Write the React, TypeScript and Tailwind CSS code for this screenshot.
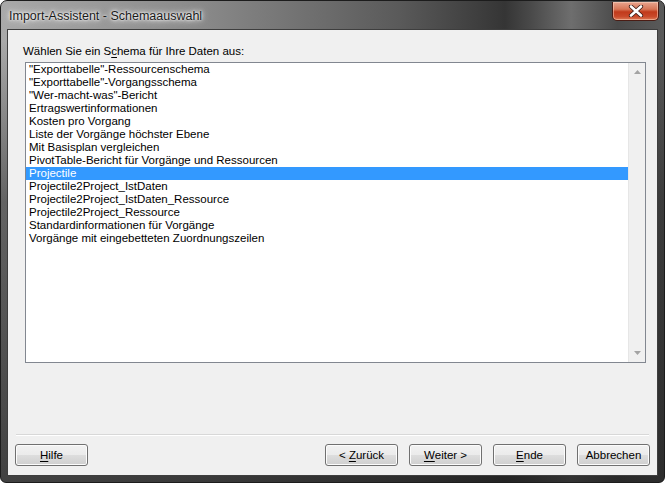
import React from "react";

const items = [
  '"Exporttabelle"-Ressourcenschema',
  '"Exporttabelle"-Vorgangsschema',
  '"Wer-macht-was"-Bericht',
  "Ertragswertinformationen",
  "Kosten pro Vorgang",
  "Liste der Vorgänge höchster Ebene",
  "Mit Basisplan vergleichen",
  "PivotTable-Bericht für Vorgänge und Ressourcen",
  "Projectile",
  "Projectile2Project_IstDaten",
  "Projectile2Project_IstDaten_Ressource",
  "Projectile2Project_Ressource",
  "Standardinformationen für Vorgänge",
  "Vorgänge mit eingebetteten Zuordnungszeilen",
];

function Btn({ children }: { children: React.ReactNode }) {
  return (
    <div className="w-[73px] h-[22px] pt-[2px] rounded-[3px] border border-[#707070] bg-[linear-gradient(180deg,#f2f2f2_0%,#ebebeb_50%,#dddddd_51%,#cfcfcf_100%)] shadow-[inset_0_0_0_1px_#fcfcfc] flex items-center justify-center text-[11.5px] text-black whitespace-pre">
      {children}
    </div>
  );
}

export default function App() {
  return (
    <div
      className="w-[665px] h-[483px] flex flex-col rounded-t-[7px] rounded-b-[6px] border border-[#1c1c1c] px-[6px] pb-[6px] bg-[linear-gradient(180deg,rgba(0,0,0,0)_0px,rgba(0,0,0,0)_40px,rgba(30,30,30,0.5)_200px,rgba(30,30,30,0.75)_483px),linear-gradient(90deg,#a9a9a9_0%,#8a8a8a_30%,#5a5a5a_60%,#353535_76%,#4a4a4a_80%,#6e6e6e_86%,#4a4a4a_93%,#5a5a5a_100%)]"
      style={{ fontFamily: '"Liberation Sans", Arial, sans-serif' }}
    >
      {/* title bar */}
      <div className="h-[28px] flex items-start justify-between shrink-0">
        <div className="pl-[2px] pt-[7px] text-[12.5px] leading-[16px] text-[#1a1a1a] [text-shadow:0_0_8px_#ffffff,0_0_4px_#ffffff,0_0_2px_#ffffff]">
          Import-Assistent - Schemaauswahl
        </div>
        <div className="mt-[1px] -mr-[1px] w-[47px] h-[19px] rounded-b-[5px] border border-[#4a1c14] border-t-0 bg-[linear-gradient(180deg,#e8a58f_0%,#d77657_40%,#c13a1b_55%,#c9492a_80%,#dd7a55_100%)] shadow-[inset_0_0_0_1px_rgba(255,220,200,0.5)] flex items-center justify-center">
          <svg width="16" height="12" viewBox="0 0 16 12">
            <path d="M3 1.5 L13 10.5 M13 1.5 L3 10.5" stroke="#3a1a14" strokeWidth="4.2" strokeLinecap="round" />
            <path d="M3 1.5 L13 10.5 M13 1.5 L3 10.5" stroke="#ffffff" strokeWidth="2.6" strokeLinecap="round" />
          </svg>
        </div>
      </div>

      {/* client */}
      <div className="flex-1 border border-[#3e3e3e] bg-[#f0f0f0] flex flex-col text-[11.5px] text-black">
        <div className="pl-[15px] pt-[13px] leading-[16px]">
          Wählen Sie ein S<span className="underline underline-offset-2">c</span>hema für Ihre Daten aus:
        </div>
        <div className="ml-[17px] mt-[3px] w-[621px] h-[301px] border border-[#828790] bg-white flex">
          <div className="flex-1 flex flex-col">
            {items.map((t, i) => (
              <div
                key={t}
                className={
                  "h-[13px] leading-[13px] pl-[3px] whitespace-nowrap " +
                  (i === 8 ? "bg-[#3399ff] text-white" : "text-black")
                }
              >
                {t}
              </div>
            ))}
          </div>
          <div className="w-[17px] bg-[#f0f0f0] border-l border-[#e6e6e6] flex flex-col justify-between items-center py-[7px]">
            <svg width="7" height="4" viewBox="0 0 7 4">
              <path d="M0 4 L3.5 0 L7 4 Z" fill="#a3a3a3" />
            </svg>
            <svg width="7" height="4" viewBox="0 0 7 4">
              <path d="M0 0 L3.5 4 L7 0 Z" fill="#a3a3a3" />
            </svg>
          </div>
        </div>
        <div className="mx-[8px] mt-[71px] h-[1px] bg-[#d8d8d8] shadow-[0_1px_0_#ffffff]" />
        <div className="mt-[9px] px-[7px] flex justify-between">
          <Btn>
            <span className="underline underline-offset-2">H</span>ilfe
          </Btn>
          <div className="flex gap-[11px]">
            <Btn>
              {"< "}
              <span className="underline underline-offset-2">Z</span>urück
            </Btn>
            <Btn>
              <span className="underline underline-offset-2">W</span>
              {"eiter >"}
            </Btn>
            <Btn>
              <span className="underline underline-offset-2">E</span>nde
            </Btn>
            <Btn>Abbrechen</Btn>
          </div>
        </div>
      </div>
    </div>
  );
}
